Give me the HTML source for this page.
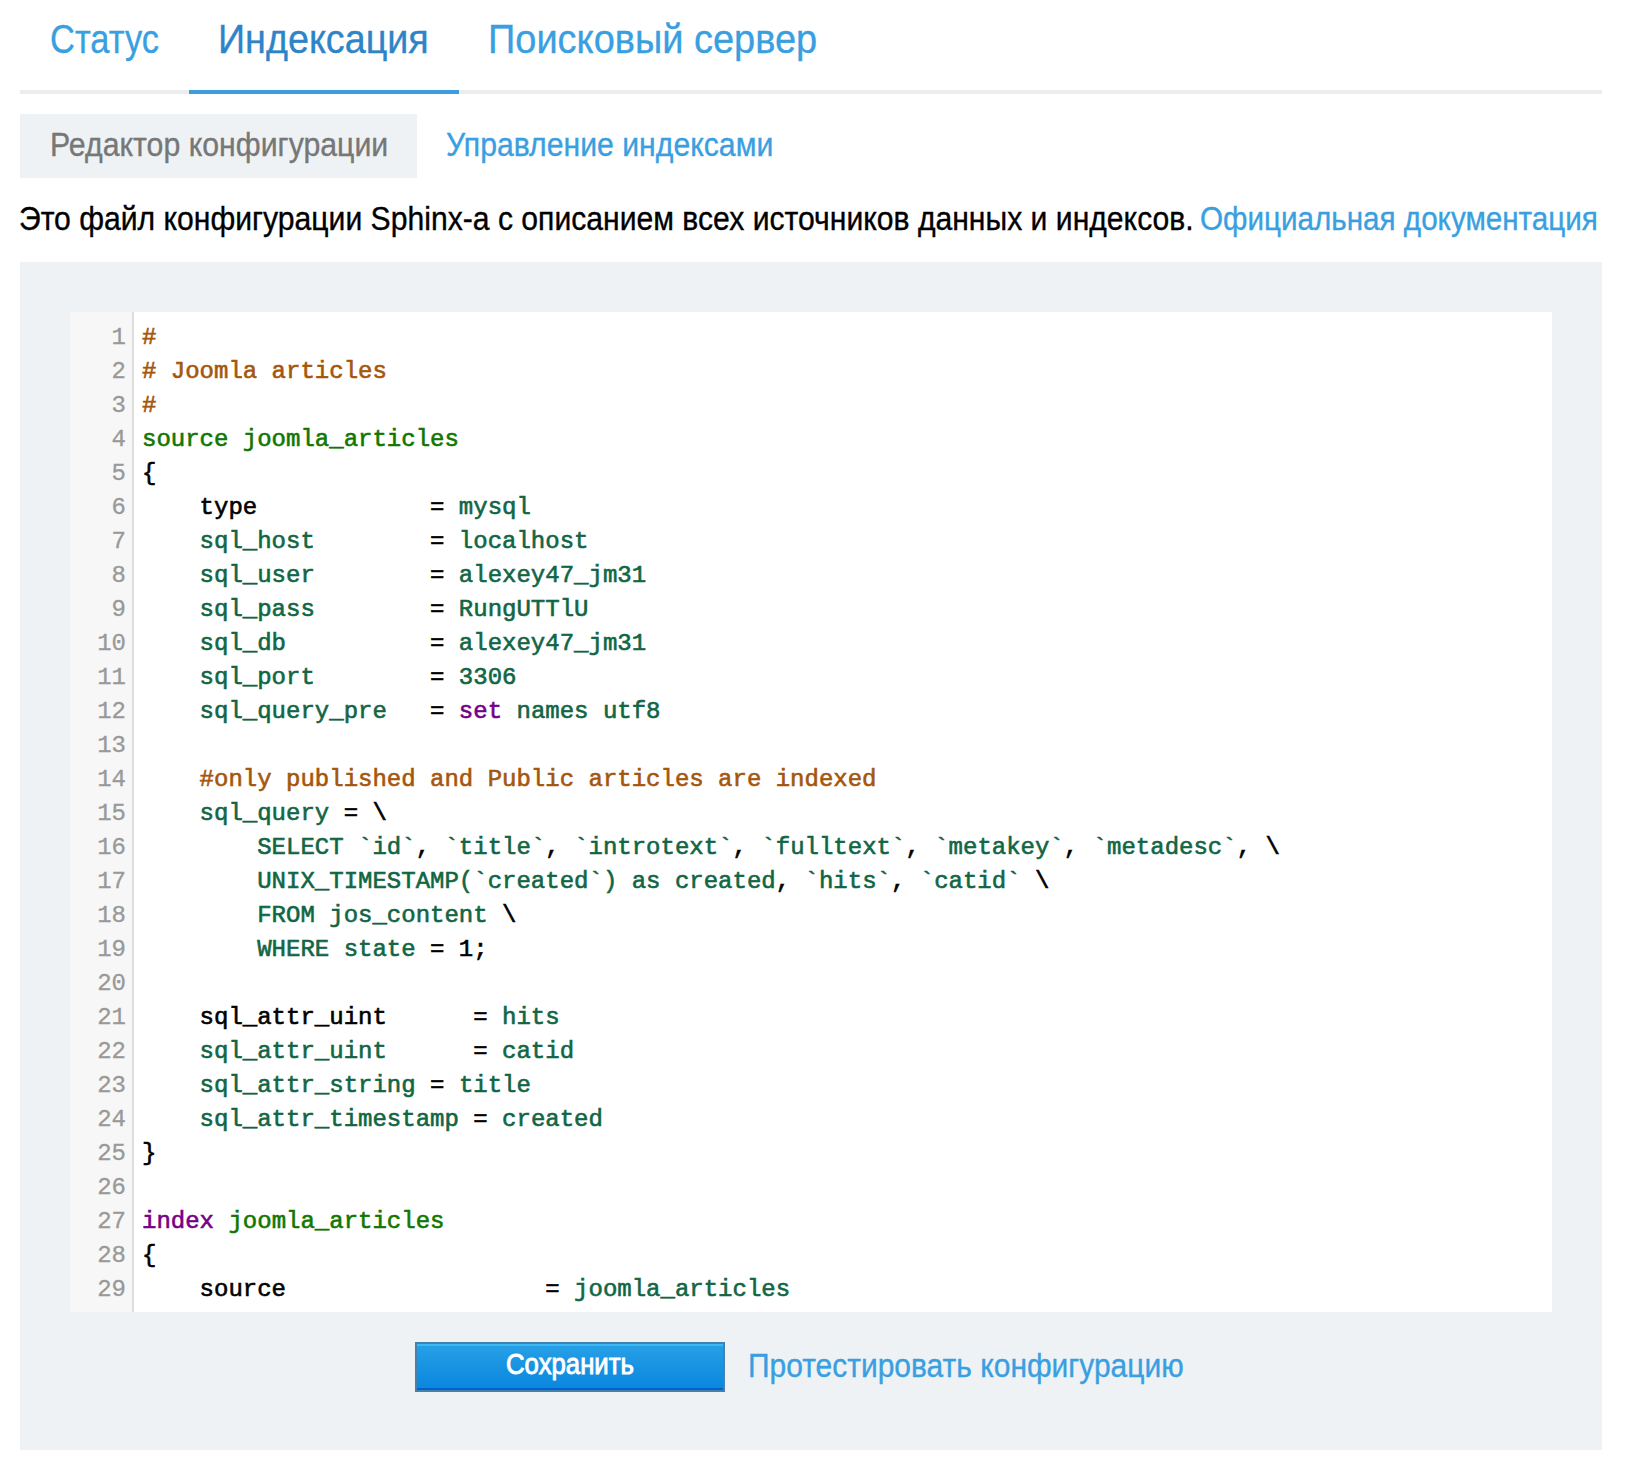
<!DOCTYPE html>
<html><head><meta charset="utf-8">
<style>
html,body{margin:0;padding:0;background:#fff;width:1636px;height:1482px;overflow:hidden;position:relative}
body{font-family:"Liberation Sans",sans-serif}
.a{-webkit-text-stroke:0.35px currentColor}
.a{position:absolute;white-space:pre;transform-origin:0 0}
.tab{font-size:41px;line-height:41px;color:#3a9fe0}
.tab.act{color:#2e84c8}
.tabline{position:absolute;left:20px;top:90px;width:1582px;height:4px;background:#ededed}
.tabul{position:absolute;left:189px;top:90px;width:270px;height:4px;background:#3a9de0}
.sub{position:absolute;left:20px;top:114px;width:397px;height:64px;background:#eef2f5}
.t32{font-size:33px;line-height:33px}
.gray{color:#777}
.blue{color:#3a9fe0}
.box{position:absolute;left:20px;top:262px;width:1582px;height:1188px;background:#eef2f5}
.cm{position:absolute;left:70px;top:312px;width:1482px;height:1000px;background:#fff;overflow:hidden}
.gut{position:absolute;left:0;top:0;width:62px;height:1000px;background:#f7f7f7;border-right:2px solid #ddd}
.ln{position:absolute;left:0;width:56px;text-align:right;font-family:"Liberation Mono",monospace;font-size:24px;line-height:34px;color:#999;white-space:pre;-webkit-text-stroke:0.3px #999}
.code{position:absolute;left:72px;top:9px;-webkit-text-stroke:0.6px currentColor;font-family:"Liberation Mono",monospace;font-size:24px;line-height:34px;color:#000;white-space:pre}
.c{color:#a5560c}.g{color:#170}.t{color:#164}.k{color:#708}
.btn{position:absolute;left:415px;top:1342px;width:310px;height:50px;box-sizing:border-box;border:2px solid #4581af;background:linear-gradient(#3cb9f2 0,#3cb9f2 2px,#269fe6 2px,#0a87de 44px,#0062c8 44px,#0062c8 46px)}
.btxt{color:#fff;font-size:29px;line-height:29px;-webkit-text-stroke:0.9px #fff}
</style></head><body>
<div class="a tab" style="left:50.3px;top:19px;transform:scaleX(0.841)">Статус</div>
<div class="a tab act" style="left:218.2px;top:19px;transform:scaleX(0.920)">Индексация</div>
<div class="a tab" style="left:488.2px;top:19px;transform:scaleX(0.926)">Поисковый сервер</div>
<div class="tabline"></div>
<div class="tabul"></div>
<div class="sub"></div>
<div class="a t32 gray" style="left:49.9px;top:128px;transform:scaleX(0.917)">Редактор конфигурации</div>
<div class="a t32 blue" style="left:446.1px;top:128px;transform:scaleX(0.915)">Управление индексами</div>
<div class="a t32" style="left:19.2px;top:202px;color:#000;transform:scaleX(0.913)">Это файл конфигурации Sphinx-а с описанием всех источников данных и индексов.</div>
<div class="a t32 blue" style="left:1200.1px;top:202px;transform:scaleX(0.898)">Официальная документация</div>
<div class="box"></div>
<div class="cm">
<div class="gut"></div>
<div class="ln" style="top:9px">1
2
3
4
5
6
7
8
9
10
11
12
13
14
15
16
17
18
19
20
21
22
23
24
25
26
27
28
29
30</div>
<div class="code"><span class="c">#</span>
<span class="c"># Joomla articles</span>
<span class="c">#</span>
<span class="g">source joomla_articles</span>
{
    type            = <span class="t">mysql</span>
    <span class="t">sql_host</span>        = <span class="t">localhost</span>
    <span class="t">sql_user</span>        = <span class="t">alexey47_jm31</span>
    <span class="t">sql_pass</span>        = <span class="t">RungUTTlU</span>
    <span class="t">sql_db</span>          = <span class="t">alexey47_jm31</span>
    <span class="t">sql_port</span>        = <span class="t">3306</span>
    <span class="t">sql_query_pre</span>   = <span class="k">set</span> <span class="t">names utf8</span>

    <span class="c">#only published and Public articles are indexed</span>
    <span class="t">sql_query</span> = \
        <span class="t">SELECT `id`</span>, <span class="t">`title`</span>, <span class="t">`introtext`</span>, <span class="t">`fulltext`</span>, <span class="t">`metakey`</span>, <span class="t">`metadesc`</span>, \
        <span class="t">UNIX_TIMESTAMP(`created`) as created</span>, <span class="t">`hits`</span>, <span class="t">`catid`</span> \
        <span class="t">FROM jos_content</span> \
        <span class="t">WHERE state</span> = 1;

    sql_attr_uint      = <span class="t">hits</span>
    <span class="t">sql_attr_uint</span>      = <span class="t">catid</span>
    <span class="t">sql_attr_string</span> = <span class="t">title</span>
    <span class="t">sql_attr_timestamp</span> = <span class="t">created</span>
}

<span class="k">index</span> <span class="g">joomla_articles</span>
{
    source                  = <span class="t">joomla_articles</span>
</div>
</div>
<div class="btn"></div>
<div class="a btxt" style="left:506.1px;top:1350px;transform:scaleX(0.888)">Сохранить</div>
<div class="a t32 blue" style="left:748.3px;top:1349px;transform:scaleX(0.908)">Протестировать конфигурацию</div>
</body></html>
